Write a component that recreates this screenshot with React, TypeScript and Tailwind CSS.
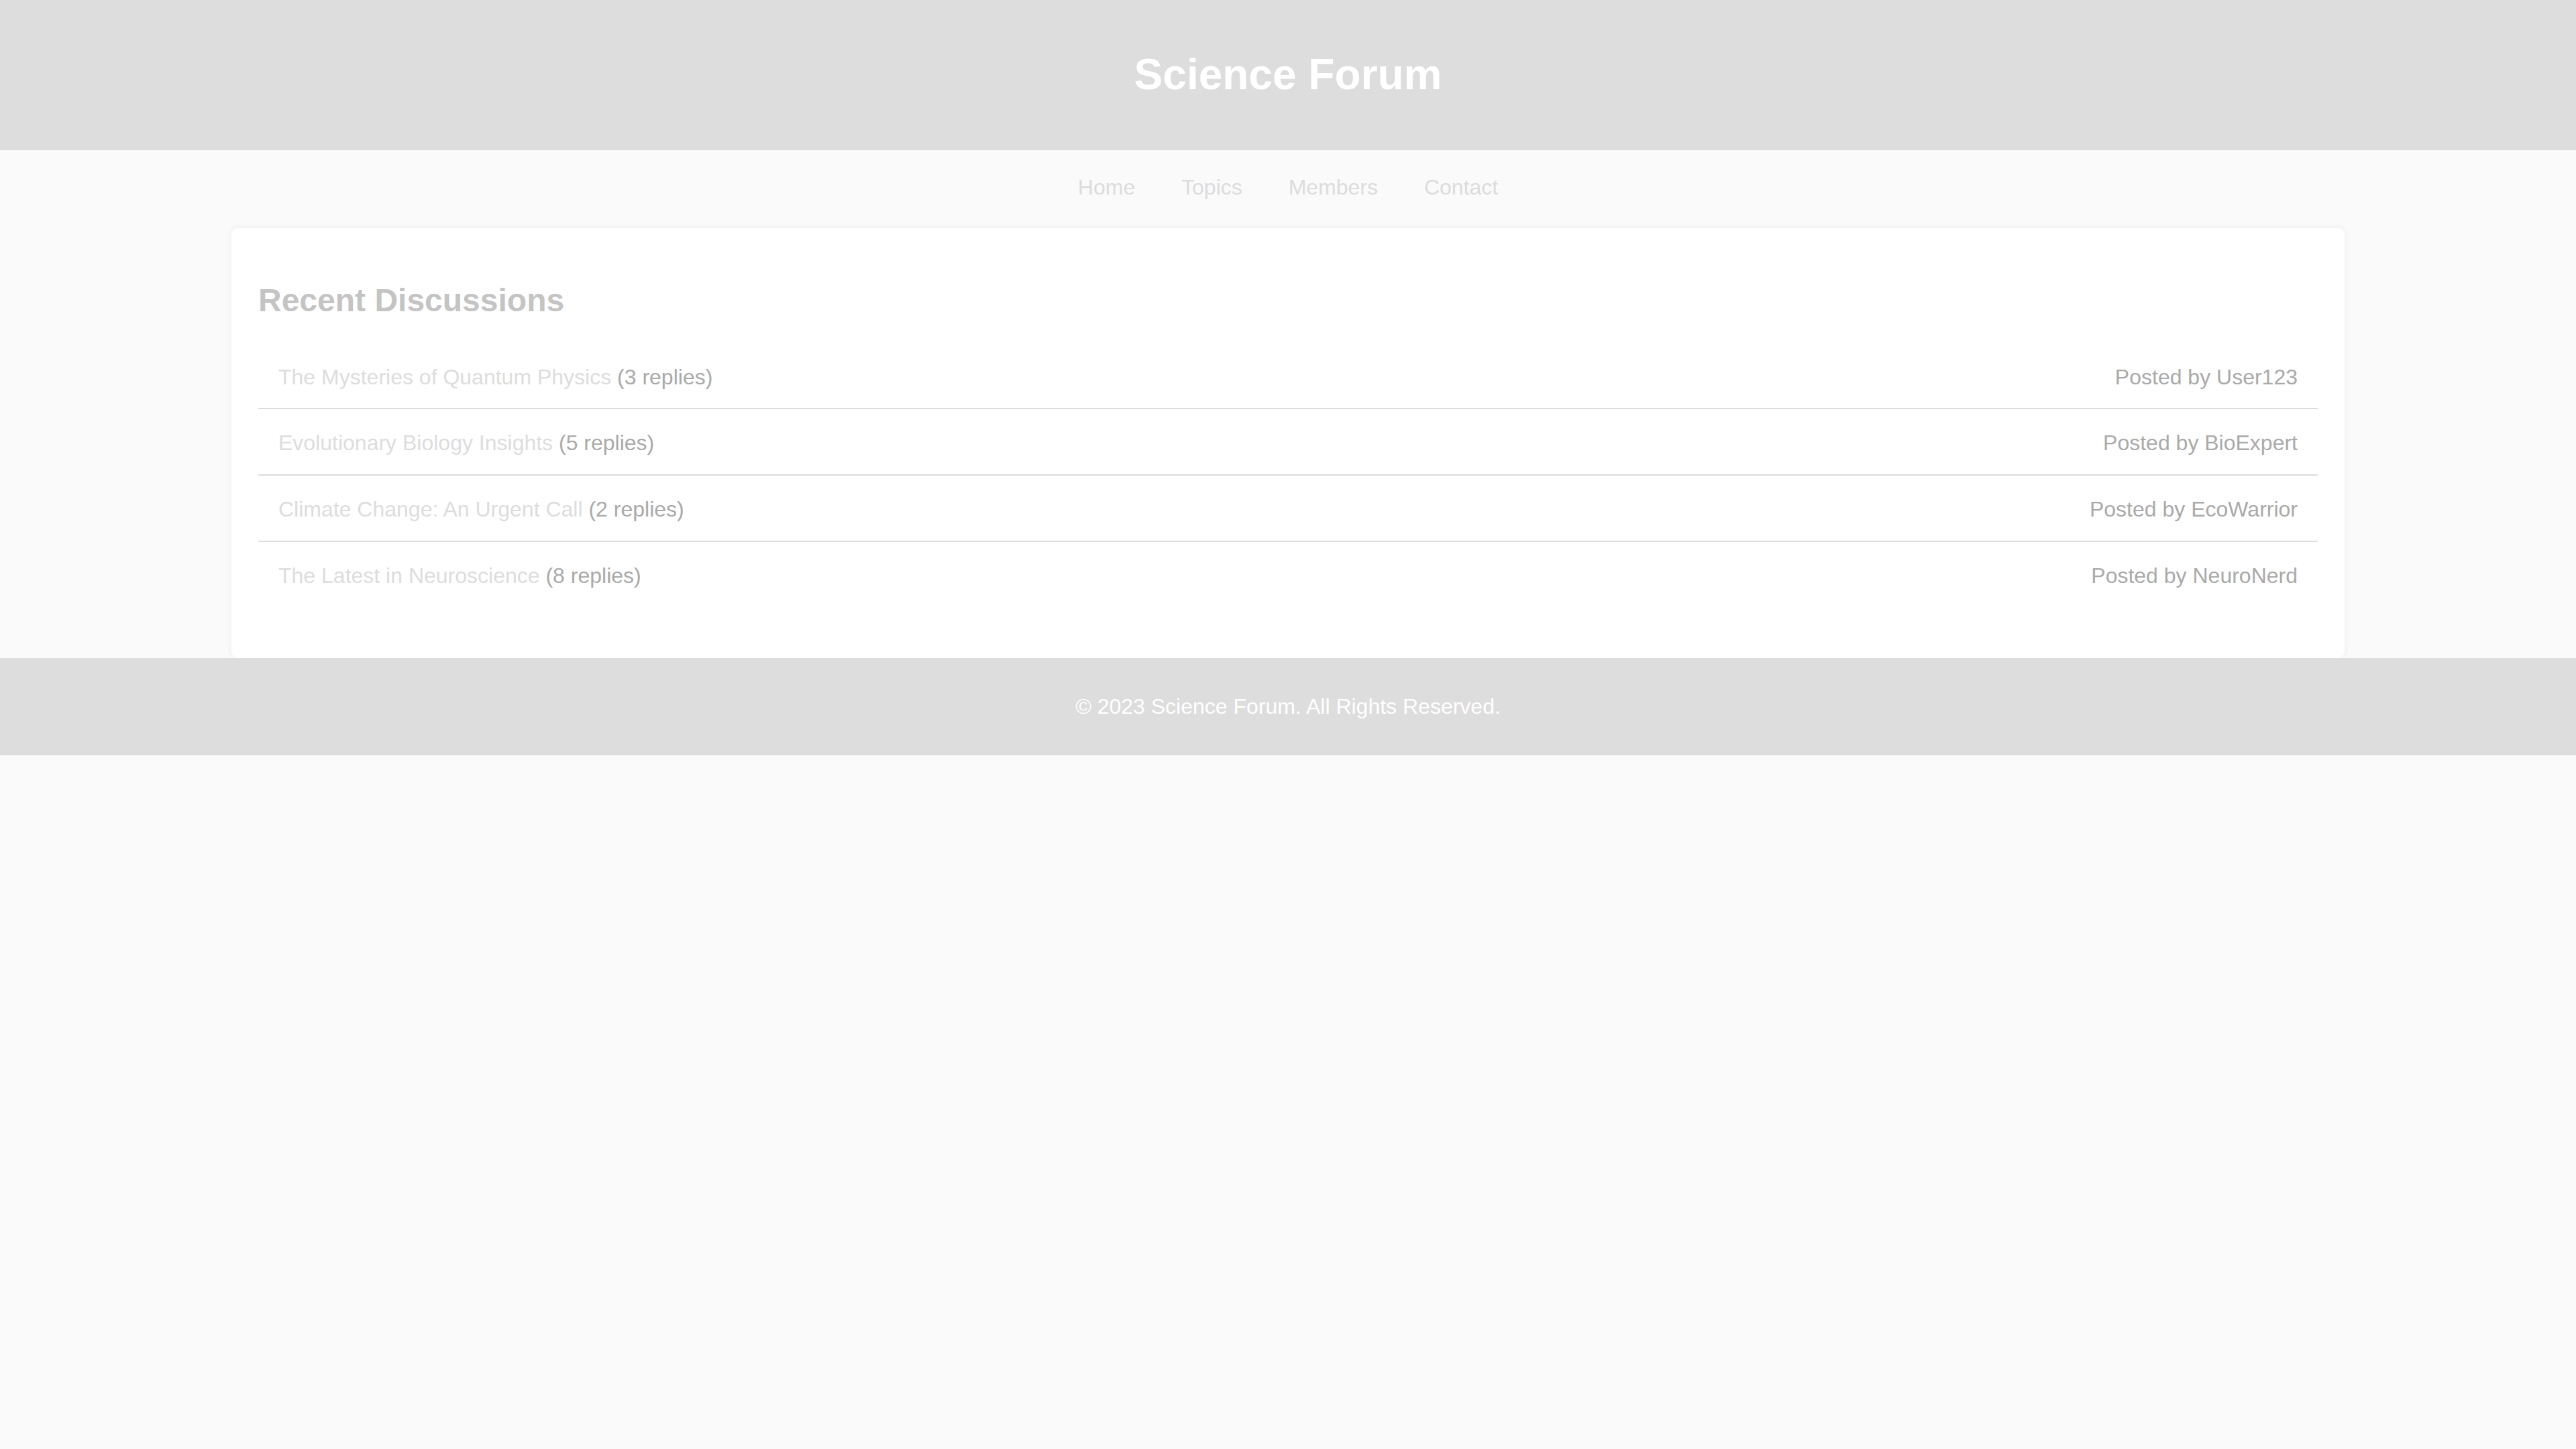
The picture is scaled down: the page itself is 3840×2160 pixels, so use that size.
import React from "react";

const discussions = [
  { title: "The Mysteries of Quantum Physics", replies: 3, author: "User123" },
  { title: "Evolutionary Biology Insights", replies: 5, author: "BioExpert" },
  { title: "Climate Change: An Urgent Call", replies: 2, author: "EcoWarrior" },
  { title: "The Latest in Neuroscience", replies: 8, author: "NeuroNerd" },
];

export default function App() {
  return (
    <div className="min-h-screen bg-[#fafafa] font-['Liberation_Sans',Arial,sans-serif] text-[32px] leading-[1.15]">
      <header className="bg-[#dddddd] py-[32px] text-center">
        <h1 className="my-[43px] text-[64px] font-bold text-white leading-[1.15]">
          Science Forum
        </h1>
      </header>

      <nav className="pt-[37px] pb-[20px] text-center">
        {["Home", "Topics", "Members", "Contact"].map((item, i) => (
          <React.Fragment key={item}>
            {i > 0 && " "}
            <a href="#" className="mx-[30px] text-[#dcdcdc] no-underline">
              {item}
            </a>
          </React.Fragment>
        ))}
      </nav>

      <main className="mx-auto mt-[23px] w-[3150px] rounded-[10px] bg-white p-[40px] shadow-[0_0_10px_rgba(0,0,0,0.06)]">
        <h2 className="mt-[40px] mb-[36px] text-[48px] font-bold text-[#c4c4c4] leading-[1.15]">
          Recent Discussions
        </h2>
        <ul className="mb-[36px]">
          {discussions.map((d, i) => (
            <li
              key={d.title}
              className={
                "flex justify-between px-[30px] pt-[32px] pb-[28px] " +
                (i < discussions.length - 1 ? "border-b-[2px] border-[#dcdcdc]" : "")
              }
            >
              <span className="text-[#aaaaaa]">
                <a href="#" className="text-[#dddddd]">
                  {d.title}
                </a>{" "}
                ({d.replies} replies)
              </span>
              <span className="text-[#aaaaaa]">Posted by {d.author}</span>
            </li>
          ))}
        </ul>
      </main>

      <footer className="bg-[#dddddd] py-[22px] text-center text-white">
        <p className="my-[32px]">© 2023 Science Forum. All Rights Reserved.</p>
      </footer>
    </div>
  );
}
